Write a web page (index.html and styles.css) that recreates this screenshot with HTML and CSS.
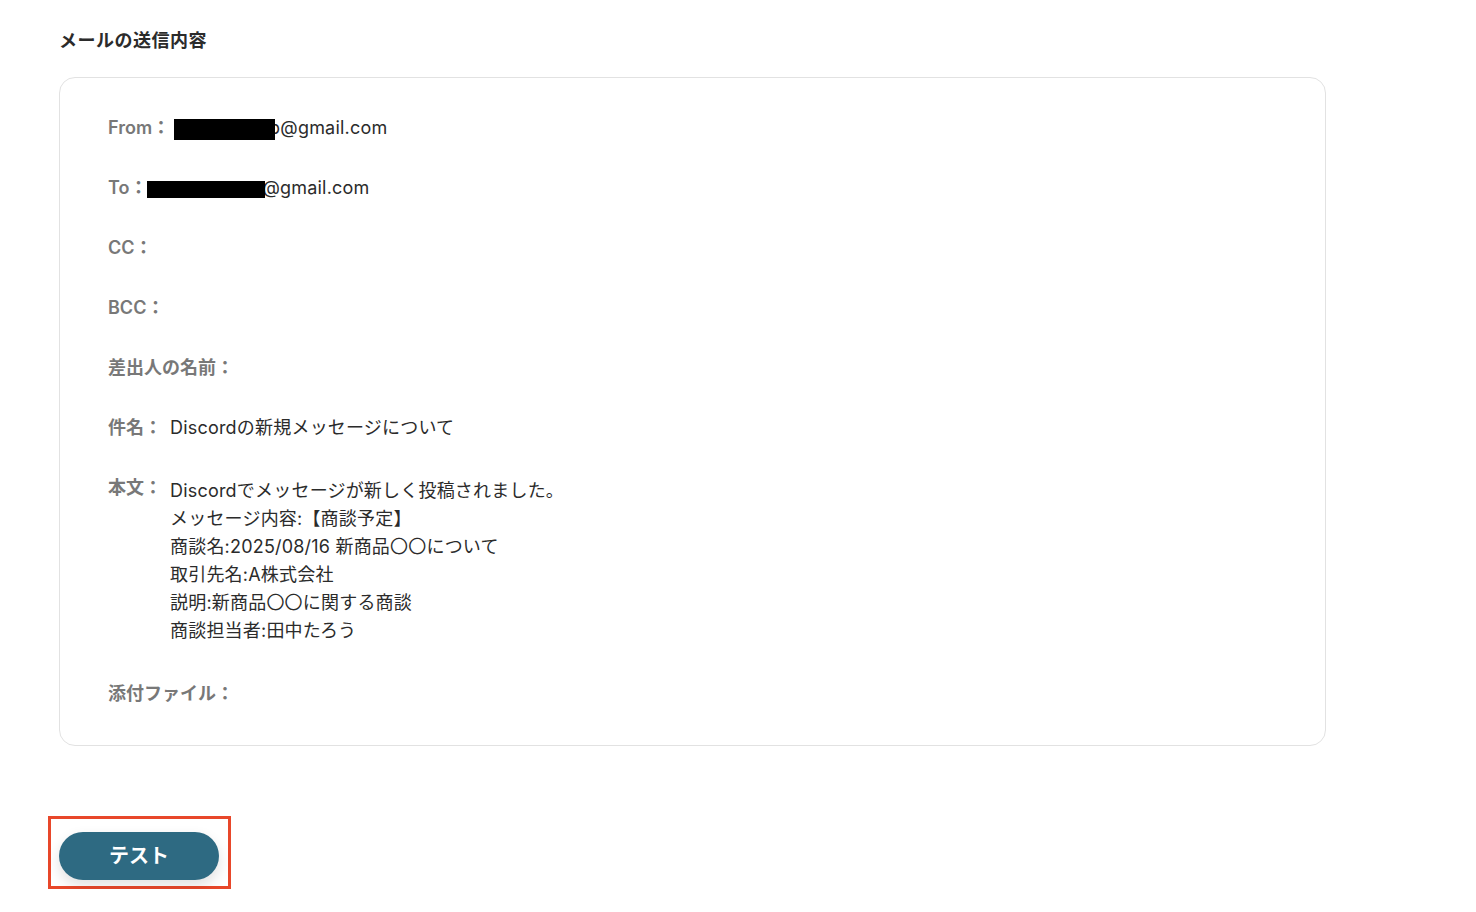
FILE: index.html
```html
<!DOCTYPE html>
<html lang="ja">
<head>
    <meta charset="UTF-8">
    <meta name="viewport" content="width=device-width, initial-scale=1.0">
    <title>メールの送信内容</title>
    <link rel="stylesheet" href="styles.css">
</head>
<body>
    <div class="page">
        <h2 class="section-title">メールの送信内容</h2>

        <div class="mail-card">
            <div class="mail-row">
                <span class="label">From：</span>
                <span class="value"><span class="redact redact-from"></span>p@gmail.com</span>
            </div>
            <div class="mail-row">
                <span class="label">To：</span>
                <span class="value"><span class="redact redact-to"></span>@gmail.com</span>
            </div>
            <div class="mail-row">
                <span class="label">CC：</span>
            </div>
            <div class="mail-row">
                <span class="label">BCC：</span>
            </div>
            <div class="mail-row">
                <span class="label">差出人の名前：</span>
            </div>
            <div class="mail-row">
                <span class="label">件名：</span>
                <span class="value">Discordの新規メッセージについて</span>
            </div>
            <div class="mail-row">
                <span class="label">本文：</span>
                <div class="value body-text">
                    <div>Discordでメッセージが新しく投稿されました。</div>
                    <div>メッセージ内容:【商談予定】</div>
                    <div>商談名:2025/08/16 新商品〇〇について</div>
                    <div>取引先名:A株式会社</div>
                    <div>説明:新商品〇〇に関する商談</div>
                    <div>商談担当者:田中たろう</div>
                </div>
            </div>
            <div class="mail-row">
                <span class="label">添付ファイル：</span>
            </div>
        </div>

        <div class="actions">
            <div class="highlight">
                <button class="test-button">テスト</button>
            </div>
        </div>
    </div>
</body>
</html>
```

FILE: styles.css
```css
body {
    margin: 0;
    background: #fff;
    font-family: Inter, "Noto Sans CJK JP", "Noto Sans", sans-serif;
    color: #333;
}

.page {
    padding: 28px 0 0 59px;
    width: 1267px;
}

.section-title {
    margin: 0 0 23px;
    font-size: 18px;
    line-height: 26px;
    font-weight: 700;
    letter-spacing: 0.5px;
    color: #2b2b2b;
}

.mail-card {
    border: 1px solid #e2e2e2;
    border-radius: 16px;
    padding: 36px 48px 37px;
    display: flex;
    flex-direction: column;
    gap: 32px;
}

.mail-row {
    display: flex;
    align-items: flex-start;
    font-size: 18px;
    line-height: 28px;
}

.label {
    color: #787878;
    font-weight: 600;
    margin-right: 8px;
    white-space: nowrap;
}

.value {
    color: #2b2b2b;
    letter-spacing: 0.2px;
}

.body-text {
    padding: 3px 0;
}

.redact {
    display: inline-block;
    background: #000;
    vertical-align: middle;
    position: relative;
}

.redact-from {
    width: 101px;
    height: 21px;
    margin-left: -4px;
    margin-right: -6px;
}

.redact-to {
    width: 118px;
    height: 17px;
    margin-left: -8px;
    margin-right: -3px;
}

.actions {
    margin-top: 70px;
    margin-left: -11px;
}

.highlight {
    display: inline-block;
    border: 3px solid #e8472a;
    padding: 13px 9px 6px 8px;
}

.test-button {
    width: 160px;
    height: 48px;
    padding: 0 0 3px;
    border: none;
    border-radius: 24px;
    background: #2e6a82;
    color: #fff;
    font-family: inherit;
    font-size: 20px;
    font-weight: 700;
    box-shadow: 0 6px 14px rgba(0, 0, 0, 0.12);
    cursor: pointer;
}
```
